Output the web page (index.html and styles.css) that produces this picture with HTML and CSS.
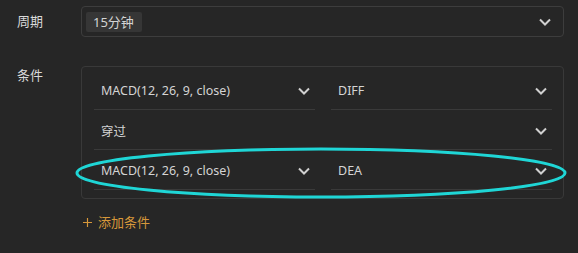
FILE: index.html
```html
<!DOCTYPE html>
<html lang="zh-CN">
<head>
    <meta charset="UTF-8">
    <title>条件设置</title>
    <link rel="stylesheet" href="styles.css">
</head>
<body>

<div class="panel">
    <div class="field">
        <div class="label">周期</div>
        <div class="select">
            <span class="tag">15分钟</span>
            <svg class="arrow" viewBox="0 0 12 8"><path d="M1 1.5L6 6.5L11 1.5"/></svg>
        </div>
    </div>

    <div class="field field-cond">
        <div class="label">条件</div>
        <div class="cond-wrap">
            <div class="cond-box">
                <div class="row">
                    <div class="cell">
                        <span>MACD(12, 26, 9, close)</span>
                        <svg class="arrow" viewBox="0 0 12 8"><path d="M1 1.5L6 6.5L11 1.5"/></svg>
                    </div>
                    <div class="cell">
                        <span>DIFF</span>
                        <svg class="arrow" viewBox="0 0 12 8"><path d="M1 1.5L6 6.5L11 1.5"/></svg>
                    </div>
                </div>
                <div class="row">
                    <div class="cell">
                        <span>穿过</span>
                        <svg class="arrow" viewBox="0 0 12 8"><path d="M1 1.5L6 6.5L11 1.5"/></svg>
                    </div>
                </div>
                <div class="row">
                    <div class="cell">
                        <span>MACD(12, 26, 9, close)</span>
                        <svg class="arrow" viewBox="0 0 12 8"><path d="M1 1.5L6 6.5L11 1.5"/></svg>
                    </div>
                    <div class="cell">
                        <span>DEA</span>
                        <svg class="arrow" viewBox="0 0 12 8"><path d="M1 1.5L6 6.5L11 1.5"/></svg>
                    </div>
                </div>
            </div>
            <!-- 标注圈 -->
            <svg class="mark" viewBox="0 0 500 56"><ellipse cx="250" cy="28" rx="244" ry="24"/></svg>
            <div class="add">
                <svg class="plus" viewBox="0 0 10 10"><path d="M5 0V10M0 5H10"/></svg>
                添加条件
            </div>
        </div>
    </div>
</div>

</body>
</html>
```

FILE: styles.css
```css
body {
    margin: 0;
    background-color: #262626;
    font-family: "Noto Sans", "Noto Sans CJK SC", sans-serif;
    font-size: 12.5px;
    color: #d4d4d4;
}
* {
    box-sizing: border-box;
}
.panel {
    padding: 6px 14px 0 17px;
}
.field {
    display: flex;
}
.label {
    width: 64px;
    line-height: 31px;
    font-size: 13px;
    color: #d9d9d9;
}
.select {
    flex: 1;
    height: 31px;
    border: 1px solid #3d3d3d;
    border-radius: 4px;
    display: flex;
    align-items: center;
    justify-content: space-between;
    padding: 0 12px 0 4px;
}
.tag {
    background-color: #363636;
    border-radius: 2px;
    padding: 0 8px 0 7px;
    line-height: 20px;
    font-size: 13px;
}
.arrow {
    width: 12px;
    height: 8px;
    fill: none;
    stroke: #d0d0d0;
    stroke-width: 2;
}
.field-cond {
    margin-top: 29px;
}
.field-cond .label {
    line-height: 18px;
}
.cond-wrap {
    flex: 1;
    position: relative;
}
.cond-box {
    border: 1px solid #393939;
    border-radius: 4px;
    padding: 3px 11px 8px 12px;
}
.row {
    display: flex;
    gap: 16px;
}
.cell {
    flex: 1;
    height: 40px;
    border-bottom: 1px solid #3a3a3a;
    display: flex;
    align-items: center;
    justify-content: space-between;
    padding: 2px 5px 0 7px;
}
.add {
    display: flex;
    align-items: center;
    gap: 6px;
    color: #d6973a;
    margin-top: 14px;
    padding-left: 2px;
    line-height: 18px;
    font-size: 13px;
}
.plus {
    width: 9px;
    height: 9px;
    stroke: #d6973a;
    stroke-width: 1.3;
}
.mark {
    position: absolute;
    left: -10px;
    top: 79px;
    width: 500px;
    height: 56px;
    fill: none;
    stroke: #1fd6d6;
    stroke-width: 3;
}
```
